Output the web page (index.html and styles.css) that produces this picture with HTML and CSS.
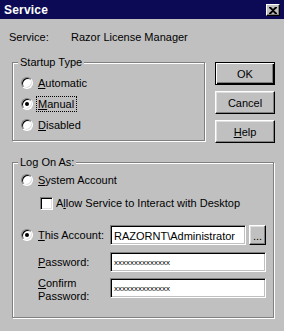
FILE: index.html
```html
<!DOCTYPE html>
<html>
<head>
<meta charset="utf-8">
<link rel="stylesheet" href="styles.css">
</head>
<body>
<div class="dialog">
  <div class="titlebar">
    <span class="title">Service</span>
    <span class="close">
      <svg width="8" height="7" viewBox="0 0 8 7"><path d="M0 0h2l2 2 2-2h2v1L5 3.5 8 6v1H6L4 5 2 7H0V6l3-2.5L0 1z" fill="#000"/></svg>
    </span>
  </div>
  <div class="service-row">
    <span class="svc-label">Service:</span>
    <span>Razor License Manager</span>
  </div>
  <div class="top-row">
    <div class="group startup">
      <span class="legend">Startup Type</span>
      <div class="opt"><span class="radio"></span><span><u>A</u>utomatic</span></div>
      <div class="opt"><span class="radio on"></span><span class="focus"><u>M</u>anual</span></div>
      <div class="opt"><span class="radio"></span><span><u>D</u>isabled</span></div>
    </div>
    <div class="buttons">
      <div class="btn default">OK</div>
      <div class="btn">Cancel</div>
      <div class="btn"><u>H</u>elp</div>
    </div>
  </div>
  <div class="group logon">
    <span class="legend">Log On As:</span>
    <div class="opt row-sys"><span class="radio"></span><span><u>S</u>ystem Account</span></div>
    <div class="opt row-chk"><span class="check"></span><span>A<u>l</u>low Service to Interact with Desktop</span></div>
    <div class="opt row-acct">
      <span class="radio on"></span><span class="flabel"><u>T</u>his Account:</span>
      <span class="field acct">RAZORNT\Administrator</span>
      <span class="browse">...</span>
    </div>
    <div class="opt row-pw">
      <span class="flabel indent"><u>P</u>assword:</span>
      <span class="field pw">xxxxxxxxxxxxxx</span>
    </div>
    <div class="opt row-cpw">
      <span class="flabel indent two"><u>C</u>onfirm<br>Password:</span>
      <span class="field pw">xxxxxxxxxxxxxx</span>
    </div>
  </div>
</div>
</body>
</html>
```

FILE: styles.css
```css
* { box-sizing: border-box; }
html, body {
  margin: 0;
  padding: 0;
}
body {
  width: 284px;
  height: 331px;
  background: #c0c0c0;
  font-family: "Liberation Sans", Arial, sans-serif;
  font-size: 11px;
  color: #000;
  overflow: hidden;
}
u { text-decoration: underline; text-underline-offset: 1px; }

.titlebar {
  height: 19px;
  background: #0c0a54;
  display: flex;
  align-items: center;
  justify-content: space-between;
  padding: 0 4px 0 4px;
}
.title {
  color: #fff;
  font-weight: bold;
  font-size: 12px;
  letter-spacing: 0.2px;
}
.close {
  width: 14px;
  height: 12px;
  background: #c0c0c0;
  border: 1px solid;
  border-color: #fff #000 #000 #fff;
  box-shadow: inset -1px -1px 0 #808080;
  display: flex;
  align-items: center;
  justify-content: center;
  margin-top: 1px;
}
.close svg { display: block; }

.service-row {
  margin-top: 12px;
  padding-left: 9px;
  display: flex;
  line-height: 13px;
}
.svc-label { width: 62px; }

.top-row {
  display: flex;
  margin-top: 18px;
  margin-left: 12px;
}

.group {
  position: relative;
  border: 1px solid #808080;
  box-shadow: 1px 1px 0 #fff, inset 1px 1px 0 #fff;
}
.legend {
  position: absolute;
  top: -7px;
  left: 5px;
  padding: 0 2px;
  background: #c0c0c0;
  line-height: 13px;
}
.startup {
  width: 193px;
  height: 79px;
  padding: 9px 0 0 8px;
}
.opt {
  display: flex;
  align-items: center;
  height: 21px;
}
.radio {
  width: 12px;
  height: 12px;
  border-radius: 50%;
  background: #fff;
  border: 1px solid;
  border-color: #808080 #fff #fff #808080;
  box-shadow: inset 1px 1px 0 #000, inset -1px -1px 0 #dfdfdf;
  margin-right: 5px;
  flex: none;
  display: flex;
  align-items: center;
  justify-content: center;
}
.radio.on::after {
  content: "";
  width: 4px;
  height: 4px;
  border-radius: 50%;
  background: #000;
}
.focus {
  outline: 1px dotted #000;
  outline-offset: 1px;
  padding: 0 1px 0 0;
}
.check {
  width: 13px;
  height: 13px;
  background: #fff;
  border: 1px solid;
  border-color: #808080 #fff #fff #808080;
  box-shadow: inset 1px 1px 0 #000, inset -1px -1px 0 #dfdfdf;
  margin-right: 3px;
  flex: none;
}

.buttons {
  display: flex;
  flex-direction: column;
  gap: 6px;
  margin-left: 10px;
}
.btn {
  width: 60px;
  height: 23px;
  border: 1px solid;
  border-color: #fff #000 #000 #fff;
  box-shadow: inset -1px -1px 0 #808080, inset 1px 1px 0 #dfdfdf;
  display: flex;
  align-items: center;
  justify-content: center;
  font-size: 11px;
}
.btn.default {
  border-color: #000;
  box-shadow: inset 1px 1px 0 #fff, inset -1px -1px 0 #000, inset -2px -2px 0 #808080;
}

.logon {
  margin: 19px 0 0 12px;
  width: 262px;
  height: 156px;
  padding: 7px 0 0 8px;
}
.row-sys { height: 20px; }
.row-chk { height: 20px; margin-top: 3px; padding-left: 19px; }
.row-acct { height: 20px; margin-top: 12px; }
.row-pw { height: 20px; margin-top: 7px; }
.row-cpw { height: 26px; margin-top: 6px; align-items: flex-start; }
.flabel { width: 72px; flex: none; line-height: 13px; }
.row-acct .flabel { width: 72px; }
.indent { margin-left: 17px; }
.row-cpw .flabel { margin-top: -1px; }
.row-cpw .field { margin-top: 0; }

.field {
  height: 20px;
  background: #fff;
  border: 1px solid;
  border-color: #808080 #fff #fff #808080;
  box-shadow: inset 1px 1px 0 #000, inset -1px -1px 0 #c0c0c0;
  padding: 1px 0 0 3px;
  display: flex;
  align-items: center;
  white-space: nowrap;
  overflow: hidden;
}
.acct { width: 136px; }
.pw { width: 156px; font-size: 8px; }
.browse {
  width: 17px;
  height: 20px;
  margin-left: 3px;
  border: 1px solid;
  border-color: #fff #000 #000 #fff;
  box-shadow: inset -1px -1px 0 #808080, inset 1px 1px 0 #dfdfdf;
  display: flex;
  align-items: center;
  justify-content: center;
  line-height: 1;
  padding-top: 2px;
}
```
